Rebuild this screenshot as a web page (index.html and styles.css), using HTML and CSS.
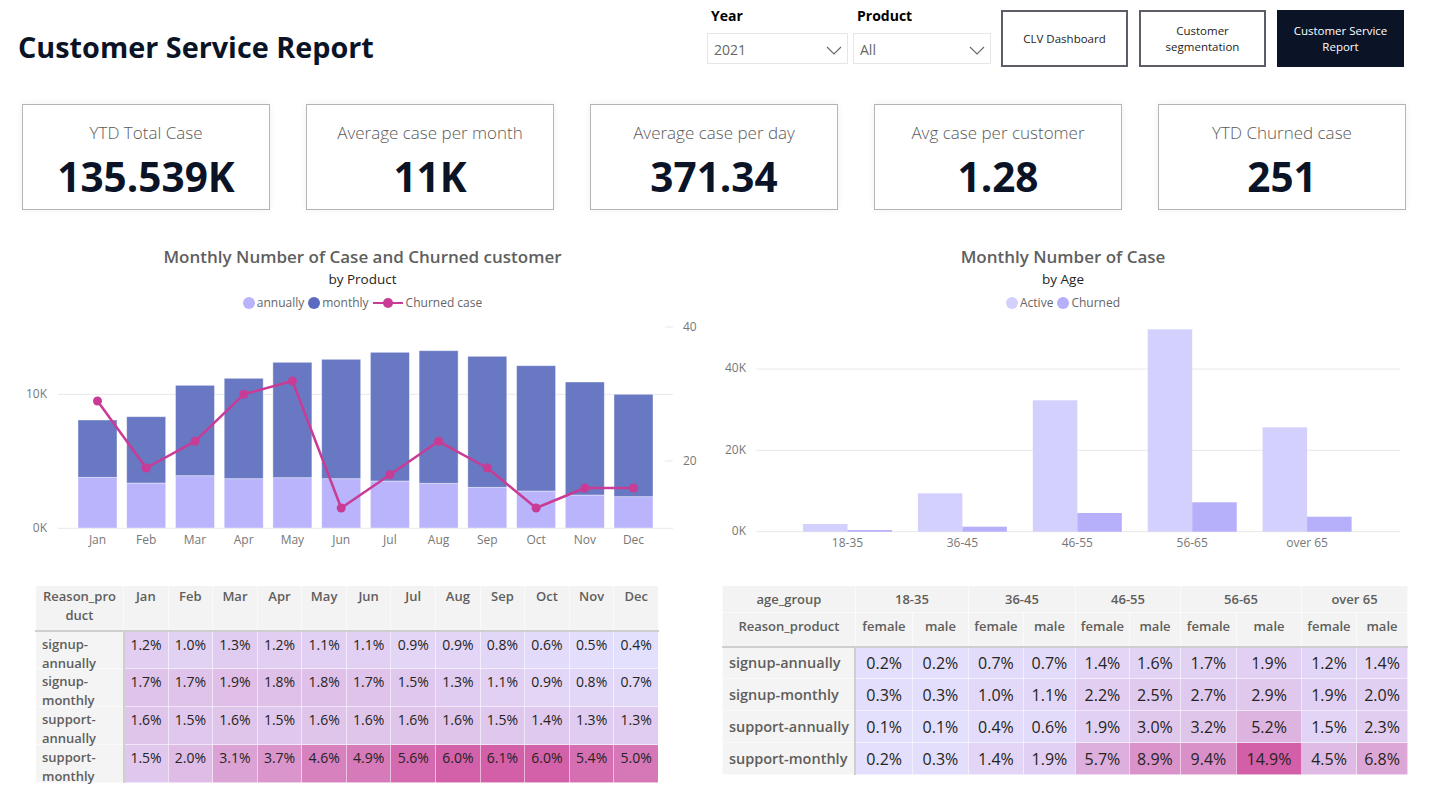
FILE: index.html
```html
<!DOCTYPE html>
<html lang="en">
<head>
<meta charset="utf-8">
<title>Customer Service Report</title>
<link rel="stylesheet" href="styles.css">
</head>
<body>
<div class="page">
  <header class="top">
    <h1 class="title">Customer Service Report</h1>
    <div class="slicers">
      <div class="slicer year">
        <div class="slicer-label">Year</div>
        <div class="dropdown"><span>2021</span><svg class="chev" width="16" height="9" viewBox="0 0 16 9"><path d="M1 1 L8 8 L15 1" fill="none" stroke="#666" stroke-width="1.1"/></svg></div>
      </div>
      <div class="slicer product">
        <div class="slicer-label">Product</div>
        <div class="dropdown"><span>All</span><svg class="chev" width="16" height="9" viewBox="0 0 16 9"><path d="M1 1 L8 8 L15 1" fill="none" stroke="#666" stroke-width="1.1"/></svg></div>
      </div>
    </div>
    <nav class="navs">
      <div class="nav">CLV Dashboard</div>
      <div class="nav">Customer<br>segmentation</div>
      <div class="nav active">Customer Service<br>Report</div>
    </nav>
  </header>

  <section class="kpis">
    <div class="kpi"><div class="kpi-label">YTD Total Case</div><div class="kpi-value">135.539K</div></div>
    <div class="kpi"><div class="kpi-label">Average case per month</div><div class="kpi-value">11K</div></div>
    <div class="kpi"><div class="kpi-label">Average case per day</div><div class="kpi-value">371.34</div></div>
    <div class="kpi"><div class="kpi-label">Avg case per customer</div><div class="kpi-value">1.28</div></div>
    <div class="kpi"><div class="kpi-label">YTD Churned case</div><div class="kpi-value">251</div></div>
  </section>

  <section class="charts">
    <div class="chart chart-left">
      <div class="chart-title">Monthly Number of Case and Churned customer</div>
      <div class="chart-sub">by Product</div>
      <div class="legend">
        <span class="lg"><i class="dot c-annual"></i>annually</span>
        <span class="lg"><i class="dot c-monthly"></i>monthly</span>
        <span class="lg"><svg class="lg-line" width="30" height="12" viewBox="0 0 30 12"><line x1="0" y1="6" x2="30" y2="6" stroke="#c83c96" stroke-width="2"/><circle cx="15" cy="6" r="5" fill="#c83c96"/></svg>Churned case</span>
      </div>
      <svg class="plot" width="715" height="250" viewBox="5 312 715 250">
        <line class="grid" x1="58" y1="394.3" x2="673" y2="394.3"/>
        <line class="grid" x1="58" y1="528.3" x2="673" y2="528.3"/>
        <line class="grid" x1="665" y1="327" x2="673" y2="327"/>
        <line class="grid" x1="665" y1="461" x2="673" y2="461"/>
        <text class="axis" x="47" y="394.3" text-anchor="end" dominant-baseline="middle">10K</text>
        <text class="axis" x="47" y="528.3" text-anchor="end" dominant-baseline="middle">0K</text>
        <text class="axis" x="683" y="327.5" dominant-baseline="middle">40</text>
        <text class="axis" x="683" y="461.5" dominant-baseline="middle">20</text>
        <g class="bars-annual">
          <rect x="78" y="477.3" width="39" height="50.7"/>
          <rect x="126.7" y="483" width="39" height="45"/>
          <rect x="175.5" y="475.7" width="39" height="52.3"/>
          <rect x="224.2" y="478.7" width="39" height="49.3"/>
          <rect x="272.9" y="477.7" width="39" height="50.3"/>
          <rect x="321.7" y="478.7" width="39" height="49.3"/>
          <rect x="370.4" y="481" width="39" height="47"/>
          <rect x="419.1" y="483.3" width="39" height="44.7"/>
          <rect x="467.8" y="487.3" width="39" height="40.7"/>
          <rect x="516.6" y="491" width="39" height="37"/>
          <rect x="565.3" y="495" width="39" height="33"/>
          <rect x="614" y="496.7" width="39" height="31.3"/>
        </g>
        <g class="bars-monthly">
          <rect x="78" y="420" width="39" height="57.3"/>
          <rect x="126.7" y="416.7" width="39" height="66.3"/>
          <rect x="175.5" y="385.3" width="39" height="90.4"/>
          <rect x="224.2" y="378.3" width="39" height="100.4"/>
          <rect x="272.9" y="362.3" width="39" height="115.4"/>
          <rect x="321.7" y="359.3" width="39" height="119.4"/>
          <rect x="370.4" y="352.3" width="39" height="128.7"/>
          <rect x="419.1" y="350.7" width="39" height="132.6"/>
          <rect x="467.8" y="356.3" width="39" height="131"/>
          <rect x="516.6" y="365.7" width="39" height="125.3"/>
          <rect x="565.3" y="382" width="39" height="113"/>
          <rect x="614" y="394.3" width="39" height="102.4"/>
        </g>
        <polyline class="churn" points="97.5,401 146.2,468 195,441.3 243.7,394.3 292.4,381 341.2,508 389.9,474.7 438.6,441.3 487.3,468 536.1,508 584.8,488 633.5,488"/>
        <g class="churn-dots">
          <circle cx="97.5" cy="401" r="4.5"/>
          <circle cx="146.2" cy="468" r="4.5"/>
          <circle cx="195" cy="441.3" r="4.5"/>
          <circle cx="243.7" cy="394.3" r="4.5"/>
          <circle cx="292.4" cy="381" r="4.5"/>
          <circle cx="341.2" cy="508" r="4.5"/>
          <circle cx="389.9" cy="474.7" r="4.5"/>
          <circle cx="438.6" cy="441.3" r="4.5"/>
          <circle cx="487.3" cy="468" r="4.5"/>
          <circle cx="536.1" cy="508" r="4.5"/>
          <circle cx="584.8" cy="488" r="4.5"/>
          <circle cx="633.5" cy="488" r="4.5"/>
        </g>
        <g class="axis" text-anchor="middle">
          <text x="97.5" y="541" dominant-baseline="middle">Jan</text>
          <text x="146.2" y="541" dominant-baseline="middle">Feb</text>
          <text x="195" y="541" dominant-baseline="middle">Mar</text>
          <text x="243.7" y="541" dominant-baseline="middle">Apr</text>
          <text x="292.4" y="541" dominant-baseline="middle">May</text>
          <text x="341.2" y="541" dominant-baseline="middle">Jun</text>
          <text x="389.9" y="541" dominant-baseline="middle">Jul</text>
          <text x="438.6" y="541" dominant-baseline="middle">Aug</text>
          <text x="487.3" y="541" dominant-baseline="middle">Sep</text>
          <text x="536.1" y="541" dominant-baseline="middle">Oct</text>
          <text x="584.8" y="541" dominant-baseline="middle">Nov</text>
          <text x="633.5" y="541" dominant-baseline="middle">Dec</text>
        </g>
      </svg>
    </div>

    <div class="chart chart-right">
      <div class="chart-title">Monthly Number of Case</div>
      <div class="chart-sub">by Age</div>
      <div class="legend">
        <span class="lg"><i class="dot c-active"></i>Active</span>
        <span class="lg"><i class="dot c-churned"></i>Churned</span>
      </div>
      <svg class="plot" width="686" height="250" viewBox="720 312 686 250">
        <line class="grid" x1="756" y1="369" x2="1400" y2="369"/>
        <line class="grid" x1="756" y1="450.3" x2="1400" y2="450.3"/>
        <line class="grid" x1="756" y1="531.7" x2="1400" y2="531.7"/>
        <text class="axis" x="746" y="369" text-anchor="end" dominant-baseline="middle">40K</text>
        <text class="axis" x="746" y="450.3" text-anchor="end" dominant-baseline="middle">20K</text>
        <text class="axis" x="746" y="531.7" text-anchor="end" dominant-baseline="middle">0K</text>
        <g class="bars-active">
          <rect x="803" y="524" width="44.5" height="7.7"/>
          <rect x="917.9" y="493.3" width="44.5" height="38.4"/>
          <rect x="1032.8" y="400.3" width="44.5" height="131.4"/>
          <rect x="1147.7" y="329.3" width="44.5" height="202.4"/>
          <rect x="1262.6" y="427.3" width="44.5" height="104.4"/>
        </g>
        <g class="bars-churned">
          <rect x="847.5" y="530" width="44.5" height="1.7"/>
          <rect x="962.4" y="526.7" width="44.5" height="5"/>
          <rect x="1077.3" y="513" width="44.5" height="18.7"/>
          <rect x="1192.2" y="502.3" width="44.5" height="29.4"/>
          <rect x="1307.1" y="516.7" width="44.5" height="15"/>
        </g>
        <g class="axis" text-anchor="middle">
          <text x="847.5" y="544" dominant-baseline="middle">18-35</text>
          <text x="962.4" y="544" dominant-baseline="middle">36-45</text>
          <text x="1077.3" y="544" dominant-baseline="middle">46-55</text>
          <text x="1192.2" y="544" dominant-baseline="middle">56-65</text>
          <text x="1307.1" y="544" dominant-baseline="middle">over 65</text>
        </g>
      </svg>
    </div>
  </section>

  <section class="tables">
    <table class="heat heat1" data-min="0.4" data-max="6.1">
      <colgroup><col class="w-lab1"><col span="12" class="w-month"></colgroup>
      <thead>
        <tr><th class="lab-h">Reason_pro<br>duct</th><th>Jan</th><th>Feb</th><th>Mar</th><th>Apr</th><th>May</th><th>Jun</th><th>Jul</th><th>Aug</th><th>Sep</th><th>Oct</th><th>Nov</th><th>Dec</th></tr>
      </thead>
      <tbody>
        <tr><th class="lab"><div class="lab-in">signup-<br>annually</div></th><td class="v">1.2%</td><td class="v">1.0%</td><td class="v">1.3%</td><td class="v">1.2%</td><td class="v">1.1%</td><td class="v">1.1%</td><td class="v">0.9%</td><td class="v">0.9%</td><td class="v">0.8%</td><td class="v">0.6%</td><td class="v">0.5%</td><td class="v">0.4%</td></tr>
        <tr><th class="lab"><div class="lab-in">signup-<br>monthly</div></th><td class="v">1.7%</td><td class="v">1.7%</td><td class="v">1.9%</td><td class="v">1.8%</td><td class="v">1.8%</td><td class="v">1.7%</td><td class="v">1.5%</td><td class="v">1.3%</td><td class="v">1.1%</td><td class="v">0.9%</td><td class="v">0.8%</td><td class="v">0.7%</td></tr>
        <tr><th class="lab"><div class="lab-in">support-<br>annually</div></th><td class="v">1.6%</td><td class="v">1.5%</td><td class="v">1.6%</td><td class="v">1.5%</td><td class="v">1.6%</td><td class="v">1.6%</td><td class="v">1.6%</td><td class="v">1.6%</td><td class="v">1.5%</td><td class="v">1.4%</td><td class="v">1.3%</td><td class="v">1.3%</td></tr>
        <tr><th class="lab"><div class="lab-in">support-<br>monthly</div></th><td class="v">1.5%</td><td class="v">2.0%</td><td class="v">3.1%</td><td class="v">3.7%</td><td class="v">4.6%</td><td class="v">4.9%</td><td class="v">5.6%</td><td class="v">6.0%</td><td class="v">6.1%</td><td class="v">6.0%</td><td class="v">5.4%</td><td class="v">5.0%</td></tr>
      </tbody>
    </table>

    <table class="heat heat2" data-min="0.1" data-max="14.9">
      <colgroup><col class="w-lab2"><col class="w57"><col class="w56"><col class="w55"><col class="w52"><col class="w54"><col class="w51"><col class="w56"><col class="w65"><col class="w55"><col class="w51"></colgroup>
      <thead>
        <tr class="grp"><th>age_group</th><th colspan="2">18-35</th><th colspan="2">36-45</th><th colspan="2">46-55</th><th colspan="2">56-65</th><th colspan="2">over 65</th></tr>
        <tr class="sub"><th>Reason_product</th><th>female</th><th>male</th><th>female</th><th>male</th><th>female</th><th>male</th><th>female</th><th>male</th><th>female</th><th>male</th></tr>
      </thead>
      <tbody>
        <tr><th class="lab">signup-annually</th><td class="v">0.2%</td><td class="v">0.2%</td><td class="v">0.7%</td><td class="v">0.7%</td><td class="v">1.4%</td><td class="v">1.6%</td><td class="v">1.7%</td><td class="v">1.9%</td><td class="v">1.2%</td><td class="v">1.4%</td></tr>
        <tr><th class="lab">signup-monthly</th><td class="v">0.3%</td><td class="v">0.3%</td><td class="v">1.0%</td><td class="v">1.1%</td><td class="v">2.2%</td><td class="v">2.5%</td><td class="v">2.7%</td><td class="v">2.9%</td><td class="v">1.9%</td><td class="v">2.0%</td></tr>
        <tr><th class="lab">support-annually</th><td class="v">0.1%</td><td class="v">0.1%</td><td class="v">0.4%</td><td class="v">0.6%</td><td class="v">1.9%</td><td class="v">3.0%</td><td class="v">3.2%</td><td class="v">5.2%</td><td class="v">1.5%</td><td class="v">2.3%</td></tr>
        <tr><th class="lab">support-monthly</th><td class="v">0.2%</td><td class="v">0.3%</td><td class="v">1.4%</td><td class="v">1.9%</td><td class="v">5.7%</td><td class="v">8.9%</td><td class="v">9.4%</td><td class="v">14.9%</td><td class="v">4.5%</td><td class="v">6.8%</td></tr>
      </tbody>
    </table>
  </section>
</div>
<script src="script.js"></script>
</body>
</html>
```

FILE: styles.css
```css
* { box-sizing: border-box; }

body {
  margin: 0;
  background: #ffffff;
  font-family: "Open Sans", "Liberation Sans", sans-serif;
  color: #252423;
}

.page {
  width: 1440px;
  height: 798px;
  overflow: hidden;
}

/* ---------- header ---------- */
.top {
  display: flex;
  height: 80px;
  padding: 0 36px 0 18px;
}

.title {
  flex: 1;
  margin: 30px 0 0;
  font-size: 28.8px;
  line-height: 34px;
  font-weight: 700;
  color: #0b1426;
}

.slicers {
  display: flex;
  gap: 5px;
  padding-top: 7px;
}

.slicer.year { width: 141px; }
.slicer.product { width: 138px; }

.slicer-label {
  padding-left: 4px;
  font-size: 14px;
  line-height: 18px;
  font-weight: 700;
  color: #000;
}

.dropdown {
  margin-top: 8px;
  height: 31px;
  border: 1px solid #e6e6e6;
  display: flex;
  align-items: center;
  justify-content: space-between;
  padding: 2px 5px 0 6px;
  font-size: 14px;
  color: #666;
}

.chev { margin-top: 2px; }

.navs {
  display: flex;
  gap: 11px;
  margin: 10px 0 0 10px;
}

.nav {
  width: 127px;
  height: 57px;
  border: 2px solid #5d5d68;
  background: #ffffff;
  display: flex;
  align-items: center;
  justify-content: center;
  text-align: center;
  font-size: 11.5px;
  line-height: 16px;
  color: #252423;
}

.nav.active {
  background: #0b1326;
  border-color: #0b1326;
  color: #ffffff;
}

/* ---------- KPI cards ---------- */
.kpis {
  display: flex;
  gap: 36px;
  margin-top: 24px;
  padding-left: 22px;
}

.kpi {
  width: 248px;
  height: 106px;
  border: 1px solid #b4b4b4;
  box-shadow: 0 0 8px rgba(0, 0, 0, 0.06);
  text-align: center;
}

.kpi-label {
  margin-top: 17px;
  font-size: 17px;
  line-height: 22px;
  font-weight: 300;
  color: #5a5a5a;
}

.kpi-value {
  margin-top: 10px;
  font-size: 40.5px;
  line-height: 46px;
  font-weight: 700;
  color: #0b1426;
}

/* ---------- charts ---------- */
.charts {
  display: flex;
  margin-top: 30px;
  padding-left: 5px;
}

.chart-left { width: 715px; }
.chart-right { width: 686px; }

.chart-title {
  margin-top: 4px;
  text-align: center;
  font-size: 17px;
  line-height: 26px;
  font-weight: 600;
  color: #5f5f5f;
}

.chart-sub {
  text-align: center;
  font-size: 13.5px;
  line-height: 18px;
  color: #252423;
}

.legend {
  margin-top: 6px;
  display: flex;
  justify-content: center;
  gap: 4px;
  font-size: 12px;
  line-height: 18px;
  color: #666666;
}

.lg {
  display: flex;
  align-items: center;
  gap: 2px;
}

.dot {
  display: inline-block;
  width: 12px;
  height: 12px;
  border-radius: 50%;
}

.c-annual { background: #b9b4fb; }
.c-monthly { background: #5b6bbf; }
.c-active { background: #d3d0fd; }
.c-churned { background: #b6b0fb; }

.lg-line { margin-right: 1px; }

.plot { display: block; }

.grid {
  stroke: #e8e8e8;
  stroke-width: 1;
}

.axis {
  font-family: "Open Sans", "Liberation Sans", sans-serif;
  font-size: 12px;
  fill: #777777;
}

.bars-annual rect { fill: #b9b4fb; }
.bars-monthly rect { fill: #6878c3; }
.bars-annual rect,
.bars-monthly rect {
  stroke: #ffffff;
  stroke-width: 0.8;
  stroke-opacity: 0.5;
}

.churn {
  fill: none;
  stroke: #c83c96;
  stroke-width: 2.5;
  stroke-linejoin: round;
}

.churn-dots circle { fill: #c83c96; }

.bars-active rect { fill: #d3d0fd; }
.bars-churned rect { fill: #b6b0fb; }

/* ---------- tables ---------- */
.tables {
  display: flex;
  align-items: flex-start;
  margin-top: 23px;
}

.heat {
  border-collapse: collapse;
  table-layout: fixed;
}

.heat th,
.heat td {
  padding: 0;
  border: 1px solid rgba(255, 255, 255, 0.55);
}

.heat thead th {
  background: #f3f3f3;
  font-weight: 600;
  color: #605e5c;
}

.heat thead tr:last-child th {
  border-bottom: 2px solid #cfcfcf;
}

.heat tbody th.lab {
  background: #f4f4f4;
  border-right: 2px solid #cfcfcf;
  text-align: left;
  font-weight: 600;
  color: #605e5c;
}

.heat td.v {
  text-align: center;
  color: #252423;
  background: #e3e0fd;
}

/* table 1 */
.heat1 {
  margin-left: 35px;
  width: 623px;
}

.w-lab1 { width: 88px; }
.w-month { width: 44.58px; }

.heat1 thead th {
  height: 45px;
  vertical-align: top;
  padding-top: 1px;
  font-size: 13px;
  line-height: 19px;
  text-align: center;
}

.heat1 tbody tr { height: 38px; }

.heat1 tbody th.lab {
  vertical-align: top;
  padding: 0 0 0 6px;
  font-size: 13px;
}

.lab-in {
  height: 36px;
  padding-top: 3px;
  line-height: 19px;
}

.heat1 td.v {
  vertical-align: top;
  padding-top: 4px;
  font-size: 14px;
  line-height: 18px;
}

/* table 2 */
.heat2 {
  margin-left: 63px;
  width: 685px;
}

.w-lab2 { width: 133px; }
.w51 { width: 51px; }
.w52 { width: 52px; }
.w54 { width: 54px; }
.w55 { width: 55px; }
.w56 { width: 56px; }
.w57 { width: 57px; }
.w65 { width: 65px; }

.heat2 thead th {
  font-size: 13px;
  line-height: 18px;
  text-align: center;
}

.heat2 tr.grp th { height: 27px; vertical-align: middle; }
.heat2 tr.sub th { height: 34px; vertical-align: top; padding-top: 4px; }

.heat2 tbody tr { height: 32px; }

.heat2 tbody th.lab {
  padding-left: 6px;
  font-size: 14.5px;
  line-height: 18px;
  vertical-align: middle;
  white-space: nowrap;
}

.heat2 td.v {
  vertical-align: middle;
  font-size: 16px;
  line-height: 20px;
}
```

FILE: script.js
```js
(function () {
  var lo = [227, 224, 253];
  var hi = [211, 95, 168];
  var tables = document.querySelectorAll('table[data-min]');
  for (var t = 0; t < tables.length; t++) {
    var table = tables[t];
    var min = parseFloat(table.getAttribute('data-min'));
    var max = parseFloat(table.getAttribute('data-max'));
    var cells = table.querySelectorAll('td.v');
    for (var i = 0; i < cells.length; i++) {
      var v = parseFloat(cells[i].textContent);
      var k = (v - min) / (max - min);
      var c = [];
      for (var j = 0; j < 3; j++) {
        c.push(Math.round(lo[j] + (hi[j] - lo[j]) * k));
      }
      cells[i].style.backgroundColor = 'rgb(' + c.join(',') + ')';
    }
  }
})();
```
